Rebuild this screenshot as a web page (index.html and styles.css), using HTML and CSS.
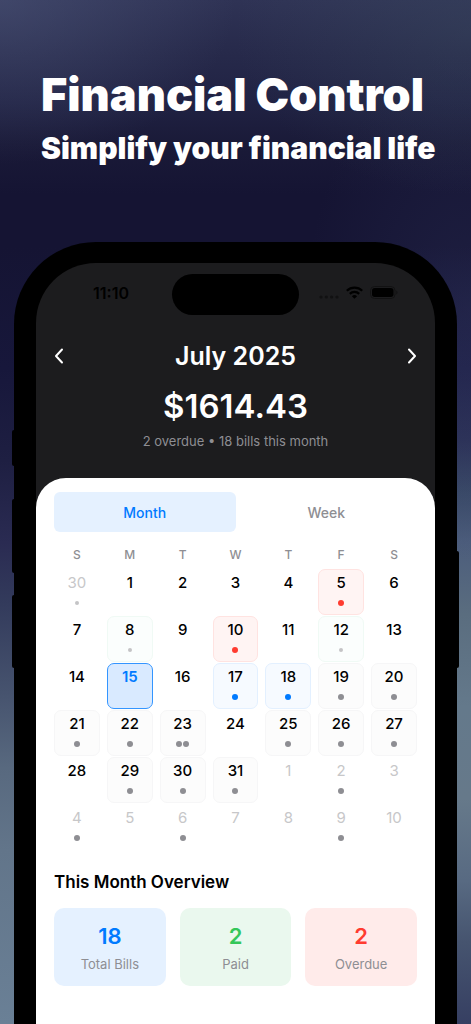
FILE: index.html
```
<!DOCTYPE html>
<html lang="en">
<head>
  <meta charset="UTF-8">
  <meta name="viewport" content="width=device-width, initial-scale=1.0">
  <title>Financial Control</title>
  <link rel="stylesheet" href="styles.css">
</head>
<body>

<!-- Headline -->
<header class="promo">
  <h1>Financial Control</h1>
  <p>Simplify your financial life</p>
</header>

<!-- Phone -->
<main class="phone">
  <span class="side-button silent"></span>
  <span class="side-button volume-up"></span>
  <span class="side-button volume-down"></span>
  <span class="side-button power"></span>

  <div class="screen">
    <div class="status-bar">
      <span class="time">11:10</span>
      <span class="island"></span>
      <span class="status-icons">
        <svg width="20" height="4" viewBox="0 0 20 4" fill="#111112">
          <circle cx="2" cy="2" r="1.6"/><circle cx="7.3" cy="2" r="1.6"/><circle cx="12.6" cy="2" r="1.6"/><circle cx="18" cy="2" r="1.6"/>
        </svg>
        <svg width="17" height="13" viewBox="0 0 17 13" fill="none" stroke="#000" stroke-width="2.2">
          <path d="M.8 4.8a11 11 0 0 1 15.4 0"/>
          <path d="M3.8 7.9a6.7 6.7 0 0 1 9.4 0"/>
          <path d="M8.5 12.8 5.9 10.2a3.7 3.7 0 0 1 5.2 0z" fill="#000" stroke="none"/>
        </svg>
        <svg width="28" height="13" viewBox="0 0 28 13">
          <rect x=".5" y=".5" width="24.5" height="12" rx="4" fill="none" stroke="#121213"/>
          <rect x="2" y="2" width="21.5" height="9" rx="2.7" fill="#000"/>
          <path d="M26.3 4.5c1.6.7 1.6 3.3 0 4z" fill="#121213"/>
        </svg>
      </span>
    </div>

    <div class="summary">
      <div class="month-nav">
        <button type="button" aria-label="Previous month">
          <svg width="10" height="16" viewBox="0 0 10 16"><path d="M8 1.500 2 8l6 6.500"/></svg>
        </button>
        <h2>July 2025</h2>
        <button type="button" aria-label="Next month">
          <svg width="10" height="16" viewBox="0 0 10 16"><path d="m2 1.500 6 6.500-6 6.500"/></svg>
        </button>
      </div>
      <p class="total">$1614.43</p>
      <p class="note">2 overdue • 18 bills this month</p>
    </div>

    <div class="sheet">
      <div class="tabs">
        <button type="button" class="active">Month</button>
        <button type="button">Week</button>
      </div>

      <table class="calendar">
        <thead>
          <tr><th>S</th><th>M</th><th>T</th><th>W</th><th>T</th><th>F</th><th>S</th></tr>
        </thead>
        <tbody>
          <tr>
            <td><button type="button" class="day other">30<span class="dots"><i class="small"></i></span></button></td>
            <td><button type="button" class="day">1</button></td>
            <td><button type="button" class="day">2</button></td>
            <td><button type="button" class="day">3</button></td>
            <td><button type="button" class="day">4</button></td>
            <td><button type="button" class="day overdue">5<span class="dots"><i></i></span></button></td>
            <td><button type="button" class="day">6</button></td>
          </tr>
          <tr>
            <td><button type="button" class="day">7</button></td>
            <td><button type="button" class="day paid">8<span class="dots"><i class="small"></i></span></button></td>
            <td><button type="button" class="day">9</button></td>
            <td><button type="button" class="day overdue">10<span class="dots"><i></i></span></button></td>
            <td><button type="button" class="day">11</button></td>
            <td><button type="button" class="day paid">12<span class="dots"><i class="small"></i></span></button></td>
            <td><button type="button" class="day">13</button></td>
          </tr>
          <tr>
            <td><button type="button" class="day">14</button></td>
            <td><button type="button" class="day today">15</button></td>
            <td><button type="button" class="day">16</button></td>
            <td><button type="button" class="day soon">17<span class="dots"><i></i></span></button></td>
            <td><button type="button" class="day soon">18<span class="dots"><i></i></span></button></td>
            <td><button type="button" class="day planned">19<span class="dots"><i></i></span></button></td>
            <td><button type="button" class="day planned">20<span class="dots"><i></i></span></button></td>
          </tr>
          <tr>
            <td><button type="button" class="day planned">21<span class="dots"><i></i></span></button></td>
            <td><button type="button" class="day planned">22<span class="dots"><i></i></span></button></td>
            <td><button type="button" class="day planned">23<span class="dots"><i></i><i></i></span></button></td>
            <td><button type="button" class="day">24</button></td>
            <td><button type="button" class="day planned">25<span class="dots"><i></i></span></button></td>
            <td><button type="button" class="day planned">26<span class="dots"><i></i></span></button></td>
            <td><button type="button" class="day planned">27<span class="dots"><i></i></span></button></td>
          </tr>
          <tr>
            <td><button type="button" class="day">28</button></td>
            <td><button type="button" class="day planned">29<span class="dots"><i></i></span></button></td>
            <td><button type="button" class="day planned">30<span class="dots"><i></i></span></button></td>
            <td><button type="button" class="day planned">31<span class="dots"><i></i></span></button></td>
            <td><button type="button" class="day other">1</button></td>
            <td><button type="button" class="day other">2<span class="dots"><i></i></span></button></td>
            <td><button type="button" class="day other">3</button></td>
          </tr>
          <tr>
            <td><button type="button" class="day other">4<span class="dots"><i></i></span></button></td>
            <td><button type="button" class="day other">5</button></td>
            <td><button type="button" class="day other">6<span class="dots"><i></i></span></button></td>
            <td><button type="button" class="day other">7</button></td>
            <td><button type="button" class="day other">8</button></td>
            <td><button type="button" class="day other">9<span class="dots"><i></i></span></button></td>
            <td><button type="button" class="day other">10</button></td>
          </tr>
        </tbody>
      </table>

      <h3>This Month Overview</h3>
      <div class="cards">
        <div class="card blue"><strong>18</strong><span>Total Bills</span></div>
        <div class="card green"><strong>2</strong><span>Paid</span></div>
        <div class="card red"><strong>2</strong><span>Overdue</span></div>
      </div>
    </div>
  </div>
</main>

</body>
</html>
```
FILE: styles.css
```
* {
  box-sizing: border-box;
}

body {
  margin: 0;
  min-height: 100vh;
  display: flex;
  flex-direction: column;
  font-family: Inter, "Liberation Sans", sans-serif;
  /* the two halves only differ behind the phone */
  background:
    radial-gradient(ellipse 50% 16% at 100% 3%, rgba(62, 80, 98, 0.35), transparent) no-repeat,
    radial-gradient(ellipse 50% 16% at 0 0, rgba(84, 94, 130, 0.45), transparent) no-repeat,
    radial-gradient(ellipse 35% 25% at 100% 30%, rgba(50, 56, 96, 0.3), transparent) no-repeat,
    linear-gradient(#2f3355 0, #272a4b 5%, #202243 10%, #1a1a38 14%, #151433 19%, #151433 24%, #20224a 36%, #2c3258 43%, #3a4a68 48%, #4c5d7c 53%, #5a6d7f 60%, #64798b 69%, #66798a 78%, #586a82 86%, #46546f 92%, #363f62 100%) right / 50% 100% no-repeat,
    linear-gradient(#2f3355 0, #272a4b 5%, #202243 10%, #1a1a38 14%, #151433 19%, #151433 24%, #17173b 36%, #1e1f42 45%, #2a2b52 53%, #333b5c 59%, #47546f 68%, #58697f 75%, #62758a 83%, #6a8096 100%);
}

button {
  padding: 0;
  border: 0;
  background: none;
  font-family: inherit;
  cursor: pointer;
}

h1, h2, h3, p {
  margin: 0;
}

.promo {
  padding: 69px 16px 0 41px;
  color: #fff;
  font-weight: 900;
  white-space: nowrap;
}

.promo h1 {
  font-size: 45px;
  line-height: 52px;
  font-weight: 900;
}

.promo p {
  margin-top: 9px;
  font-size: 30px;
  line-height: 36px;
}

/* Phone frame */
.phone {
  position: relative;
  flex: 1;
  display: flex;
  margin: 76px 14px 0;
  padding: 21px 22px 0;
  background: #000;
  border-radius: 82px 82px 0 0;
}

.side-button {
  position: absolute;
  left: -2px;
  width: 4px;
  background: #000;
  border-radius: 2px;
}

.silent {
  top: 188px;
  height: 36px;
}

.volume-up {
  top: 257px;
  height: 74px;
}

.volume-down {
  top: 353px;
  height: 73px;
}

.power {
  top: 309px;
  left: auto;
  right: -2px;
  height: 117px;
}

.screen {
  flex: 1;
  display: flex;
  flex-direction: column;
  overflow: hidden;
  background: #1c1c1e;
  border-radius: 60px 60px 0 0;
}

.status-bar {
  display: grid;
  grid-template-columns: 1fr 127px 1fr;
  align-items: center;
  padding-top: 11px;
}

.time {
  padding: 0 0 4px 14px;
  color: #000;
  font-size: 16px;
  line-height: 20px;
  font-weight: 600;
  text-align: center;
}

.island {
  height: 41px;
  background: #000;
  border-radius: 21px;
}

.status-icons {
  display: flex;
  align-items: center;
  justify-content: flex-end;
  gap: 7px;
  padding: 0 37px 5px 0;
}

.status-icons svg:first-child {
  margin-top: 9px;
}

/* Month summary */
.summary {
  padding: 25px 18px 27px;
  color: #fff;
  text-align: center;
}

.month-nav {
  display: flex;
  align-items: center;
  justify-content: space-between;
}

.month-nav button {
  display: flex;
}

.month-nav path {
  fill: none;
  stroke: #fff;
  stroke-width: 2;
  stroke-linecap: round;
  stroke-linejoin: round;
}

.month-nav h2 {
  font-size: 25px;
  line-height: 32px;
  font-weight: 600;
}

.total {
  margin-top: 14px;
  font-size: 33px;
  line-height: 40px;
  font-weight: 600;
}

.note {
  margin-top: 5px;
  color: #8e8e93;
  font-size: 13px;
  line-height: 20px;
}

/* Calendar sheet */
.sheet {
  flex: 1;
  padding: 14px 18px 38px;
  background: #fff;
  border-radius: 30px 30px 0 0;
}

.tabs {
  display: flex;
}

.tabs button {
  flex: 1;
  height: 40px;
  border-radius: 6px;
  color: #8e8e93;
  font-size: 14px;
  font-weight: 500;
}

.tabs .active {
  background: #e5f1ff;
  color: #007aff;
}

.calendar {
  width: calc(100% + 14px);
  margin: 12px -7px 0;
  table-layout: fixed;
  border-spacing: 7px 1px;
}

.calendar th {
  height: 23px;
  padding: 0 0 4px;
  color: #8e8e93;
  font-size: 12px;
  font-weight: 500;
}

.calendar td {
  padding: 0;
}

.day {
  display: flex;
  flex-direction: column;
  align-items: center;
  width: 100%;
  height: 46px;
  padding-top: 3px;
  border: 1px solid transparent;
  border-radius: 7px;
  color: #000;
  font-size: 15px;
  line-height: 20px;
  font-weight: 500;
}

.dots {
  display: flex;
  align-items: center;
  justify-content: center;
  gap: 1px;
  height: 6px;
  margin-top: 7px;
}

.dots i {
  width: 6px;
  height: 6px;
  border-radius: 50%;
  background: #8e8e93;
}

.dots .small {
  width: 4px;
  height: 4px;
  background: #c4c4c6;
}

.other {
  color: #c7c7c9;
  font-weight: 400;
}

.overdue {
  background: #fff4f3;
  border-color: #ffe3e1;
}

.overdue i {
  background: #ff3b30;
}

.paid {
  background: #fbfefd;
  border-color: #f0faf5;
}

.soon {
  background: #f6faff;
  border-color: #e3f0ff;
}

.soon i {
  background: #007aff;
}

.planned {
  background: #fcfcfc;
  border-color: #f6f6f7;
}

.today {
  background: #d9eaff;
  border-color: #3395ff;
  color: #007aff;
  font-weight: 600;
}

.sheet h3 {
  margin-top: 19px;
  color: #000;
  font-size: 17px;
  line-height: 24px;
  font-weight: 600;
}

.cards {
  display: grid;
  grid-template-columns: repeat(3, 1fr);
  gap: 14px;
  margin-top: 14px;
}

.card {
  display: flex;
  flex-direction: column;
  align-items: center;
  gap: 4px;
  padding: 14px 0 12px;
  border-radius: 10px;
}

.card strong {
  font-size: 22px;
  line-height: 28px;
  font-weight: 600;
}

.card span {
  color: #8e8e93;
  font-size: 13px;
  line-height: 20px;
}

.blue {
  background: #e5f1ff;
  color: #007aff;
}

.green {
  background: #eaf8ee;
  color: #34c759;
}

.red {
  background: #ffebea;
  color: #ff3b30;
}
```
